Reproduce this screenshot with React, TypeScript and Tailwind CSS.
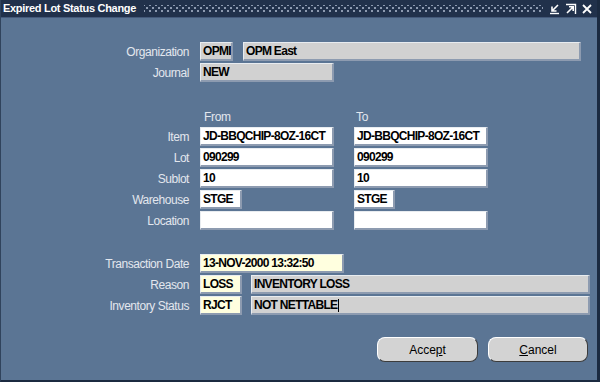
import React from "react";

const font = { fontFamily: '"Liberation Sans", Arial, sans-serif' };

function Field({
  w,
  text,
  kind = "white",
  caret = false,
}: {
  w: string;
  text?: string;
  kind?: "white" | "gray" | "yellow";
  caret?: boolean;
}) {
  const bg =
    kind === "white" ? "bg-white" : kind === "gray" ? "bg-[#d1d1d1]" : "bg-[#ffffdf]";
  return (
    <div
      className={`${w} h-[19px] ${bg} flex items-center pl-[2px] border-t border-l border-t-[#e8ecf0] border-l-[#e8ecf0] border-b-2 border-r-2 border-b-[#8d9bb0] border-r-[#8d9bb0] text-[12px] font-bold tracking-[-0.7px] text-black leading-none whitespace-nowrap overflow-hidden`}
    >
      <span>{text}</span>
      {caret && <span className="inline-block w-px h-[13px] bg-black ml-[1px]" />}
    </div>
  );
}

function Label({ children }: { children: React.ReactNode }) {
  return (
    <div className="w-[188px] shrink-0 text-right text-[12px] tracking-[-0.45px] text-[#e3e7ee] leading-none">
      {children}
    </div>
  );
}

function Row({ label, children, className = "" }: { label: string; children: React.ReactNode; className?: string }) {
  return (
    <div className={`flex items-center h-[19px] ${className}`}>
      <Label>{label}</Label>
      <div className="ml-[11px] flex items-center">{children}</div>
    </div>
  );
}

export default function App() {
  return (
    <div
      style={font}
      className="w-[600px] h-[382px] bg-[#5b7594] flex flex-col border-l border-l-[#30435c] border-r-[3px] border-r-[#1b2a40] border-b-2 border-b-[#1b2a40] overflow-hidden"
    >
      {/* Title bar */}
      <div className="h-[18px] shrink-0 bg-[#21314b] border-b border-b-[#44597a] flex items-center pl-[2px] pr-[4px]">
        <span className="text-white text-[11px] font-bold leading-none tracking-[-0.3px] whitespace-nowrap">
          Expired Lot Status Change
        </span>
        <div className="flex-1 h-[8px] ml-[8px] mr-[6px] bg-[radial-gradient(circle,#8d9ab0_0.9px,transparent_1.1px),radial-gradient(circle,#8d9ab0_0.9px,transparent_1.1px)] bg-[length:6px_6px] bg-[position:0_0,3px_3px]" />
        <div className="flex items-center gap-[4px]">
          <svg width="12" height="12" viewBox="0 0 12 12">
            <path d="M9 2 L3 8 M3 3.5 V8 H7.5" stroke="#ffffff" strokeWidth="1.6" fill="none" />
            <path d="M1 10.5 H10" stroke="#ffffff" strokeWidth="1.4" />
          </svg>
          <svg width="12" height="12" viewBox="0 0 12 12">
            <path d="M1 1.5 H10.5 V11" stroke="#ffffff" strokeWidth="1.4" fill="none" />
            <path d="M2 10 L8 4 M4 3.8 H8.2 V8" stroke="#ffffff" strokeWidth="1.6" fill="none" />
          </svg>
          <svg width="12" height="12" viewBox="0 0 12 12">
            <path d="M2 2 L10 10 M10 2 L2 10" stroke="#ffffff" strokeWidth="1.8" />
          </svg>
        </div>
      </div>

      {/* Body */}
      <div className="flex flex-col">
        <Row label="Organization" className="mt-[24px]">
          <Field w="w-[33px]" text="OPMI" kind="gray" />
          <div className="ml-[10px]">
            <Field w="w-[338px]" text="OPM East" kind="gray" />
          </div>
        </Row>
        <Row label="Journal" className="mt-[2px]">
          <Field w="w-[134px]" text="NEW" kind="gray" />
        </Row>

        <div className="flex h-[14px] mt-[28px] items-center text-[12px] tracking-[-0.3px] text-[#e3e7ee] leading-none">
          <div className="w-[188px] shrink-0" />
          <div className="ml-[15px] w-[150px]">From</div>
          <div className="ml-[2px]">To</div>
        </div>

        <Row label="Item" className="mt-[3px]">
          <Field w="w-[134px]" text="JD-BBQCHIP-8OZ-16CT" />
          <div className="ml-[20px]">
            <Field w="w-[134px]" text="JD-BBQCHIP-8OZ-16CT" />
          </div>
        </Row>
        <Row label="Lot" className="mt-[2px]">
          <Field w="w-[134px]" text="090299" />
          <div className="ml-[20px]">
            <Field w="w-[134px]" text="090299" />
          </div>
        </Row>
        <Row label="Sublot" className="mt-[2px]">
          <Field w="w-[134px]" text="10" />
          <div className="ml-[20px]">
            <Field w="w-[134px]" text="10" />
          </div>
        </Row>
        <Row label="Warehouse" className="mt-[2px]">
          <Field w="w-[42px]" text="STGE" />
          <div className="ml-[112px]">
            <Field w="w-[41px]" text="STGE" />
          </div>
        </Row>
        <Row label="Location" className="mt-[2px]">
          <Field w="w-[134px]" text="" />
          <div className="ml-[20px]">
            <Field w="w-[134px]" text="" />
          </div>
        </Row>

        <Row label="Transaction Date" className="mt-[24px]">
          <Field w="w-[144px]" text="13-NOV-2000 13:32:50" kind="yellow" />
        </Row>
        <Row label="Reason" className="mt-[2px]">
          <Field w="w-[42px]" text="LOSS" kind="yellow" />
          <div className="ml-[9px]">
            <Field w="w-[339px]" text="INVENTORY LOSS" kind="gray" />
          </div>
        </Row>
        <Row label="Inventory Status" className="mt-[2px]">
          <Field w="w-[42px]" text="RJCT" kind="yellow" />
          <div className="ml-[9px]">
            <Field w="w-[339px]" text="NOT NETTABLE" kind="gray" caret />
          </div>
        </Row>

        <div className="flex justify-end mt-[22px] pr-[9px] gap-[10px]">
          <button className="w-[101px] h-[25px] rounded-[8px] bg-[#d3d3d3] border border-t-white border-l-white border-b-[#3c3c3c] border-r-[#3c3c3c] text-[12px] text-black leading-none">
            Acce<span className="underline">p</span>t
          </button>
          <button className="w-[100px] h-[25px] rounded-[8px] bg-[#d3d3d3] border border-t-white border-l-white border-b-[#3c3c3c] border-r-[#3c3c3c] text-[12px] text-black leading-none">
            <span className="underline">C</span>ancel
          </button>
        </div>
      </div>
    </div>
  );
}
